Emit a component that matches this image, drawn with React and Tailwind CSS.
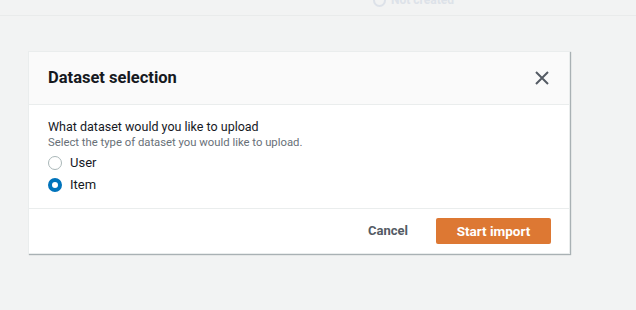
import React, { useState } from 'react';

const Radio = ({ checked, label, onClick }) => (
  <label className="flex items-center gap-[8px] h-[22px] cursor-pointer" onClick={onClick}>
    {checked ? (
      <span className="w-[14px] h-[14px] rounded-full border-[4px] border-[#0073bb] bg-white" />
    ) : (
      <span className="w-[14px] h-[14px] rounded-full border-[1.5px] border-[#aab7b8] bg-white" />
    )}
    <span className="text-[13px] text-[#16191f]">{label}</span>
  </label>
);

const App = () => {
  const [dataset, setDataset] = useState('item');

  return (
    <div className="w-[636px] h-[310px] bg-[#f2f3f3] overflow-hidden font-['Roboto',sans-serif]">
      {/* Faded page behind the modal */}
      <div className="h-[16px] border-b border-[#e9ebeb] relative">
        <div className="absolute left-[373px] top-[-9px] flex items-center gap-[5px] opacity-50">
          <span className="w-[13px] h-[13px] rounded-full border-[2px] border-[#c9d2e0]" />
          <span className="text-[12px] font-bold text-[#c9d2e0]">Not created</span>
        </div>
      </div>

      {/* Modal */}
      <div className="ml-[28px] mt-[35px] w-[542px] bg-white border border-[#eaeded] shadow-[1px_1px_1px_rgba(0,28,36,0.3)]">
        <div className="h-[53px] bg-[#fafafa] border-b border-[#eaeded] flex items-center justify-between pl-[19px] pr-[20px]">
          <h2 className="text-[16.5px] font-bold text-[#16191f]">Dataset selection</h2>
          <svg width="14" height="14" viewBox="0 0 14 14" className="text-[#545b64]">
            <path d="M1 1l12 12M13 1L1 13" stroke="currentColor" strokeWidth="2" fill="none" />
          </svg>
        </div>
        <div className="px-[19px] pt-[13px] pb-[12px] border-b border-[#eaeded]">
          <p className="text-[12.5px] leading-[18px] text-[#16191f]">What dataset would you like to upload</p>
          <p className="text-[11.3px] leading-[13px] text-[#687078] mb-[3px]">Select the type of dataset you would like to upload.</p>
          <Radio label="User" checked={dataset === 'user'} onClick={() => setDataset('user')} />
          <Radio label="Item" checked={dataset === 'item'} onClick={() => setDataset('item')} />
        </div>
        <div className="h-[44px] flex items-center justify-end pr-[18px] gap-[8px]">
          <button className="px-[20px] h-[26px] text-[13px] font-bold text-[#545b64]">Cancel</button>
          <button className="w-[115px] h-[26px] rounded-[2px] bg-[#dd7833] text-[13.5px] font-bold text-white">
            Start import
          </button>
        </div>
      </div>
    </div>
  );
};

export default App;
